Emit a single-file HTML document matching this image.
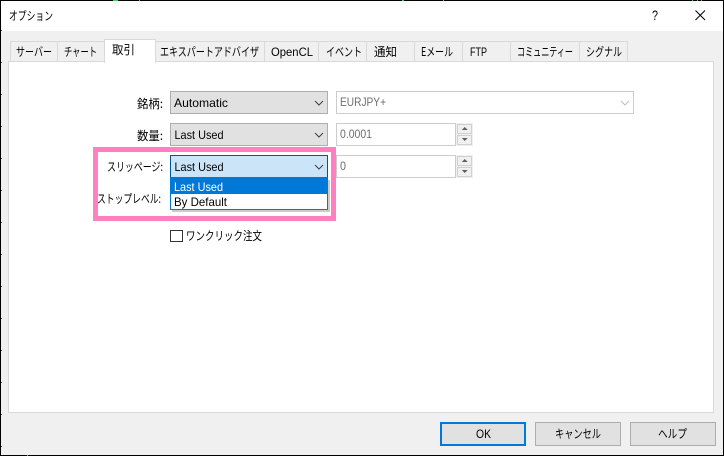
<!DOCTYPE html>
<html><head><meta charset="utf-8"><style>
html,body{margin:0;padding:0;background:#f0f0f0;width:724px;height:456px;overflow:hidden}
svg{display:block}
text{font-family:"Liberation Sans","Noto Sans CJK JP",sans-serif;font-size:12px;fill:#000}
.j{font-family:"Noto Sans CJK JP","Liberation Sans",sans-serif}
.g{fill:#6d6d6d}
</style></head><body>
<svg width="724" height="456" viewBox="0 0 724 456" xmlns="http://www.w3.org/2000/svg" shape-rendering="crispEdges">
<rect width="724" height="456" fill="#f0f0f0"/>
<rect x="0" y="0" width="724" height="31" fill="#fff"/>
<rect x="0" y="0" width="724" height="1" fill="#000"/>
<rect x="0" y="0" width="1" height="456" fill="#000"/>
<rect x="723" y="0" width="1" height="456" fill="#000"/>
<rect x="0" y="455" width="724" height="1" fill="#000"/>
<g fill="#3fd34a"><rect x="113" y="0" width="5" height="1"/><rect x="139" y="0" width="1" height="1"/><rect x="402" y="0" width="2" height="1"/><rect x="443" y="0" width="1" height="1"/><rect x="692" y="0" width="1" height="1"/><rect x="697" y="0" width="1" height="1"/><rect x="701" y="0" width="1" height="1"/><rect x="27" y="455" width="1" height="1"/></g>
<g fill="#555"><rect x="1" y="30" width="1" height="1"/><rect x="1" y="62" width="1" height="1"/><rect x="1" y="94" width="1" height="1"/><rect x="1" y="126" width="1" height="1"/><rect x="1" y="158" width="1" height="1"/><rect x="1" y="190" width="1" height="1"/><rect x="1" y="222" width="1" height="1"/><rect x="1" y="254" width="1" height="1"/><rect x="1" y="286" width="1" height="1"/><rect x="1" y="318" width="1" height="1"/><rect x="1" y="350" width="1" height="1"/><rect x="1" y="382" width="1" height="1"/><rect x="1" y="414" width="1" height="1"/><rect x="1" y="446" width="1" height="1"/></g>

<text class="j" x="9" y="20" textLength="44" lengthAdjust="spacingAndGlyphs">オプション</text>
<text x="652" y="20" textLength="6" lengthAdjust="spacingAndGlyphs" style="font-size:14px">?</text>
<path d="M695.5 10.5L705 20M705 10.5L695.5 20" stroke="#000" stroke-width="1" fill="none" shape-rendering="geometricPrecision"/>

<!-- panel -->
<rect x="8.5" y="61.5" width="705" height="351" fill="#fff" stroke="#d9d9d9"/>
<!-- tabs -->
<g fill="#f0f0f0" stroke="#d9d9d9">
<rect x="10.5" y="41.5" width="47" height="20"/>
<rect x="57.5" y="41.5" width="47" height="20"/>
<rect x="155.5" y="41.5" width="109" height="20"/>
<rect x="264.5" y="41.5" width="54" height="20"/>
<rect x="318.5" y="41.5" width="48" height="20"/>
<rect x="366.5" y="41.5" width="48" height="20"/>
<rect x="414.5" y="41.5" width="48" height="20"/>
<rect x="462.5" y="41.5" width="48" height="20"/>
<rect x="510.5" y="41.5" width="69" height="20"/>
<rect x="579.5" y="41.5" width="48" height="20"/>
</g>
<rect x="104.5" y="39.5" width="51" height="23" fill="#fff" stroke="#d9d9d9"/>
<rect x="105" y="61" width="50" height="3" fill="#fff"/>
<text class="j" x="16" y="56" textLength="36" lengthAdjust="spacingAndGlyphs">サーバー</text>
<text class="j" x="64" y="56" textLength="33" lengthAdjust="spacingAndGlyphs">チャート</text>
<text class="j" x="112" y="54" textLength="23" lengthAdjust="spacingAndGlyphs">取引</text>
<text class="j" x="160" y="56" textLength="99" lengthAdjust="spacingAndGlyphs">エキスパートアドバイザ</text>
<text x="271" y="56" textLength="42" lengthAdjust="spacingAndGlyphs">OpenCL</text>
<text class="j" x="326" y="56" textLength="36" lengthAdjust="spacingAndGlyphs">イベント</text>
<text class="j" x="374" y="56" textLength="23" lengthAdjust="spacingAndGlyphs">通知</text>
<text class="j" x="421" y="56" textLength="32" lengthAdjust="spacingAndGlyphs">Eメール</text>
<text x="470" y="56" textLength="17" lengthAdjust="spacingAndGlyphs">FTP</text>
<text class="j" x="517" y="56" textLength="56" lengthAdjust="spacingAndGlyphs">コミュニティー</text>
<text class="j" x="586" y="56" textLength="36" lengthAdjust="spacingAndGlyphs">シグナル</text>

<!-- pink highlight -->
<rect x="95.5" y="149.5" width="238" height="69" fill="#fff" stroke="#ff7fc0" stroke-width="5"/>

<!-- labels -->
<text class="j" x="137" y="108" textLength="26" lengthAdjust="spacingAndGlyphs">銘柄:</text>
<text class="j" x="137" y="140" textLength="26" lengthAdjust="spacingAndGlyphs">数量:</text>
<text class="j" x="107" y="171" textLength="56" lengthAdjust="spacingAndGlyphs">スリッページ:</text>
<text class="j" x="97" y="203" textLength="64" lengthAdjust="spacingAndGlyphs">ストップレベル:</text>

<!-- combos -->
<rect x="170.5" y="91.5" width="157" height="22" fill="#e1e1e1" stroke="#adadad"/>
<rect x="170.5" y="123.5" width="157" height="22" fill="#e1e1e1" stroke="#adadad"/>
<rect x="170.5" y="155.5" width="157" height="22" fill="#cce4f7" stroke="#005499"/>
<text x="174" y="107" textLength="54" lengthAdjust="spacingAndGlyphs">Automatic</text>
<text x="174.5" y="139" textLength="49" lengthAdjust="spacingAndGlyphs">Last Used</text>
<text x="174.5" y="171" textLength="49" lengthAdjust="spacingAndGlyphs">Last Used</text>
<g fill="none" stroke="#404040" stroke-width="1" shape-rendering="geometricPrecision">
<path d="M315 101L319 105L323 101"/>
<path d="M315 133L319 137L323 133"/>
<path d="M315 165L319 169L323 165"/>
</g>

<!-- dropdown -->
<rect x="172" y="180" width="158" height="32" fill="#000" opacity=".2"/>
<rect x="170.5" y="177.5" width="157" height="32" fill="#fff" stroke="#0078d7"/>
<rect x="171" y="178" width="156" height="16" fill="#0078d7"/>
<text x="174" y="191" textLength="49" lengthAdjust="spacingAndGlyphs" style="fill:#fff">Last Used</text>
<text x="174" y="206" textLength="53" lengthAdjust="spacingAndGlyphs">By Default</text>

<!-- right inputs -->
<rect x="336.5" y="91.5" width="297" height="22" fill="#fff" stroke="#cccccc"/>
<text class="g" x="340" y="106" textLength="46" lengthAdjust="spacingAndGlyphs">EURJPY+</text>
<path d="M621 101L625 105L629 101" fill="none" stroke="#bfbfbf" shape-rendering="geometricPrecision"/>
<rect x="336.5" y="123.5" width="119" height="22" fill="#fff" stroke="#cccccc"/>
<text class="g" x="340" y="138" textLength="32" lengthAdjust="spacingAndGlyphs">0.0001</text>
<rect x="336.5" y="155.5" width="119" height="22" fill="#fff" stroke="#cccccc"/>
<text class="g" x="340" y="170" textLength="6" lengthAdjust="spacingAndGlyphs">0</text>

<!-- spinners -->
<g>
<rect x="456" y="123" width="17" height="23" fill="#f0f0f0"/>
<rect x="457.5" y="124.5" width="14" height="9" fill="#f0f0f0" stroke="#d0d0d0"/>
<rect x="457.5" y="135.5" width="14" height="9" fill="#f0f0f0" stroke="#d0d0d0"/>
<path d="M464.5 127L461.5 130H467.5Z" fill="#606060"/>
<path d="M461.5 138H467.5L464.5 141Z" fill="#606060"/>
<rect x="456" y="155" width="17" height="23" fill="#f0f0f0"/>
<rect x="457.5" y="156.5" width="14" height="9" fill="#f0f0f0" stroke="#d0d0d0"/>
<rect x="457.5" y="167.5" width="14" height="9" fill="#f0f0f0" stroke="#d0d0d0"/>
<path d="M464.5 159L461.5 162H467.5Z" fill="#606060"/>
<path d="M461.5 170H467.5L464.5 173Z" fill="#606060"/>
</g>

<!-- checkbox -->
<rect x="170.5" y="230.5" width="12" height="11" fill="#fff" stroke="#333"/>
<text class="j" x="186" y="240" textLength="76" lengthAdjust="spacingAndGlyphs">ワンクリック注文</text>

<!-- buttons -->
<rect x="441" y="423" width="84" height="22" fill="#e1e1e1" stroke="#0078d7" stroke-width="2"/>
<rect x="535.5" y="422.5" width="85" height="23" fill="#e1e1e1" stroke="#adadad"/>
<rect x="630.5" y="422.5" width="85" height="23" fill="#e1e1e1" stroke="#adadad"/>
<text x="476" y="438" textLength="15" lengthAdjust="spacingAndGlyphs">OK</text>
<text class="j" x="555" y="438" textLength="46" lengthAdjust="spacingAndGlyphs">キャンセル</text>
<text class="j" x="658" y="438" textLength="29" lengthAdjust="spacingAndGlyphs">ヘルプ</text>
</svg>
</body></html>
